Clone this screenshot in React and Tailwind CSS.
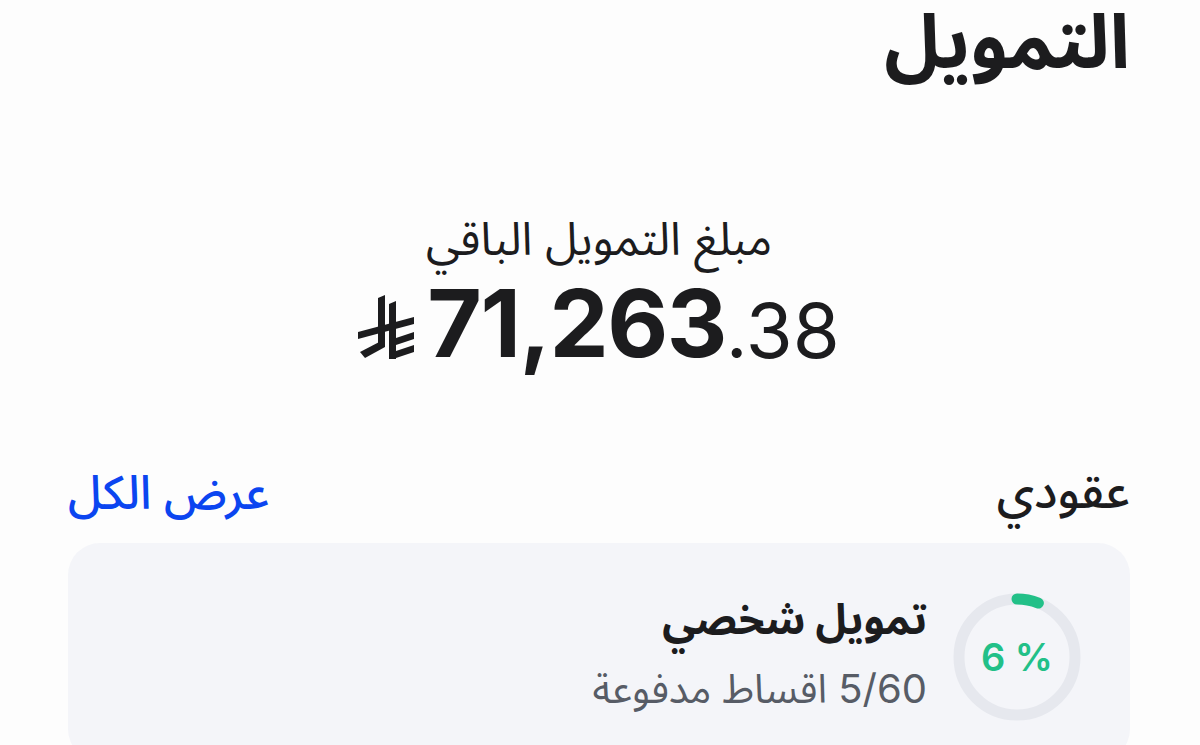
import React from 'react'

const font = { fontFamily: '"Inter", "Noto Sans Arabic", "DejaVu Sans", sans-serif' }

function Riyal({ className }) {
    return (
        <svg viewBox="0 0 75 80" className={className} fill="#1c1c1e">
            <polygon points="28,10 35,7 35,58 28,58" />
            <polygon points="35,51 35,59 15,70 10,64" />
            <polygon points="39,16 46,13 46,71 39,71" />
            <polygon points="8,44 64,29 64,36 8,51" />
            <polygon points="46,50 64,44 64,51 46,57" />
            <polygon points="46,63 64,57 64,64 46,70" />
        </svg>
    )
}

function Ring({ percent }) {
    const r = 58
    const c = 2 * Math.PI * r
    return (
        <div className="relative w-[128px] h-[128px] shrink-0">
            <svg viewBox="0 0 128 128" className="w-full h-full -rotate-90">
                <circle cx="64" cy="64" r={r} fill="none" stroke="#e6e8ee" strokeWidth="11" />
                <circle
                    cx="64" cy="64" r={r} fill="none" stroke="#22c088" strokeWidth="11"
                    strokeLinecap="round"
                    strokeDasharray={`${(percent / 100) * c} ${c}`}
                />
            </svg>
            <div className="absolute inset-0 flex items-center justify-center text-[38px] font-semibold text-[#22c088]" dir="ltr">
                {percent} %
            </div>
        </div>
    )
}

export default function App() {
    return (
        <div dir="rtl" style={font} className="bg-[#fdfdfd] text-[#1c1c1e] pr-[70px] pl-[68px] overflow-hidden h-[745px]">
            {/* title */}
            <h1 className="text-[75px] font-bold leading-[1.08]">التمويل</h1>

            {/* remaining amount */}
            <div className="flex flex-col items-center mt-[134px]">
                <p className="text-[46px] leading-none">مبلغ التمويل الباقي</p>
                <div dir="ltr" className="flex items-end mt-[15px] -ml-[8px]">
                    <Riyal className="w-[75px] h-[80px] mb-[2px]" />
                    <span className="text-[94px] font-bold leading-none tracking-[-1.5px] ml-[2px]">71,263</span>
                    <span className="text-[76px] leading-none mb-[2px]">.38</span>
                </div>
            </div>

            {/* contracts header */}
            <div className="flex items-center justify-between mt-[97px]">
                <h2 className="text-[48px] font-medium leading-none">عقودي</h2>
                <button className="text-[47px] font-medium leading-none text-[#0b45f0]">عرض الكل</button>
            </div>

            {/* contract card */}
            <div className="mt-[28px] bg-[#f4f5f9] rounded-[32px] pt-[50px] pr-[49px] pb-[40px] flex items-start gap-[26px]">
                <Ring percent={6} />
                <div className="flex flex-col">
                    <p className="text-[42px] font-bold leading-tight">تمويل شخصي</p>
                    <p className="text-[40px] text-[#575c66] leading-tight mt-[18px]">5/60 اقساط مدفوعة</p>
                </div>
            </div>
        </div>
    )
}
